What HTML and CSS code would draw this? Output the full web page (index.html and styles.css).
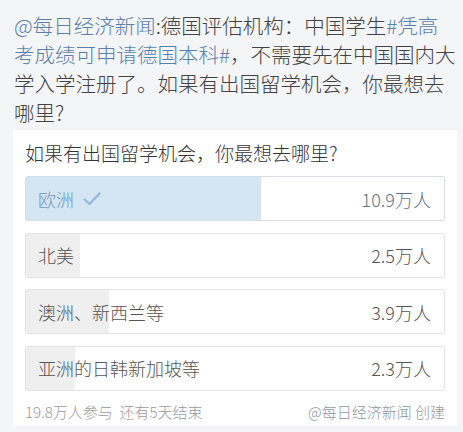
FILE: index.html
```html
<!DOCTYPE html>
<html lang="zh-CN">
<head>
    <meta charset="UTF-8">
    <meta name="viewport" content="width=device-width, initial-scale=1.0">
    <title>投票 - 如果有出国留学机会，你最想去哪里?</title>
    <link rel="stylesheet" href="styles.css">
</head>
<body>
    <p class="post">
        <span class="link">@每日经济新闻</span>:德国评估机构：中国学生<span class="link">#凭高考成绩可申请德国本科#</span>，不需要先在中国国内大学入学注册了。如果有出国留学机会，你最想去哪里?
    </p>

    <section class="poll-card">
        <h2 class="poll-title">如果有出国留学机会，你最想去哪里?</h2>

        <div class="option selected" style="--pct: 56.2%">
            <span class="option-label">欧洲
                <svg class="check" width="18" height="14" viewBox="0 0 18 14">
                    <path d="M1.5 7.5 L6.5 12 L16.5 1.5" fill="none" stroke="#8fb8e0" stroke-width="2.2" stroke-linecap="round" stroke-linejoin="round"/>
                </svg>
            </span>
            <span class="option-count">10.9万人</span>
        </div>
        <div class="option" style="--pct: 12.9%">
            <span class="option-label">北美</span>
            <span class="option-count">2.5万人</span>
        </div>
        <div class="option" style="--pct: 19.9%">
            <span class="option-label">澳洲、新西兰等</span>
            <span class="option-count">3.9万人</span>
        </div>
        <div class="option" style="--pct: 11.7%">
            <span class="option-label">亚洲的日韩新加坡等</span>
            <span class="option-count">2.3万人</span>
        </div>

        <div class="poll-footer">
            <span>19.8万人参与&nbsp;&nbsp;还有5天结束</span>
            <span><span class="creator">@每日经济新闻</span> 创建</span>
        </div>
    </section>
</body>
</html>
```

FILE: styles.css
```css
body {
    margin: 0;
    background-color: #f4f5f7;
    font-family: "Noto Sans CJK SC", "Noto Sans", sans-serif;
    font-weight: 300;
}

.post {
    margin: 0;
    padding: 11px 6px 0 14px;
    font-size: 20.5px;
    line-height: 29px;
    color: #424242;
}

.post .link {
    color: #5a7fab;
}

.poll-card {
    margin: 3px 6px 0 13px;
    padding: 10px 12px 4px 12px;
    background-color: #fff;
}

.poll-title {
    margin: 0 0 10px 0;
    font-size: 19px;
    font-weight: 300;
    line-height: 26px;
    color: #333;
}

.option {
    display: flex;
    align-items: center;
    justify-content: space-between;
    box-sizing: border-box;
    height: 45px;
    margin-bottom: 11.5px;
    padding: 0 13px 0 12px;
    border: 1px solid #e3e3e3;
    border-radius: 3px;
    background: linear-gradient(to right, #efefef var(--pct), #fff var(--pct));
    font-size: 18px;
    color: #555;
}

.option.selected {
    border-color: #d5dee7;
    background: linear-gradient(to right, #d6e5f2 var(--pct), #fff var(--pct));
}

.option.selected .option-label {
    color: #7095bb;
}

.option.selected .option-count {
    color: #5e7185;
}

.option-label {
    display: flex;
    align-items: center;
    gap: 9px;
}

.check {
    display: block;
}

.option:last-of-type {
    margin-bottom: 0;
}

.poll-footer {
    display: flex;
    justify-content: space-between;
    margin-top: 11px;
    font-size: 15px;
    line-height: 20px;
    color: #9a9a9a;
}

.creator {
    color: #8f98a3;
}
```
